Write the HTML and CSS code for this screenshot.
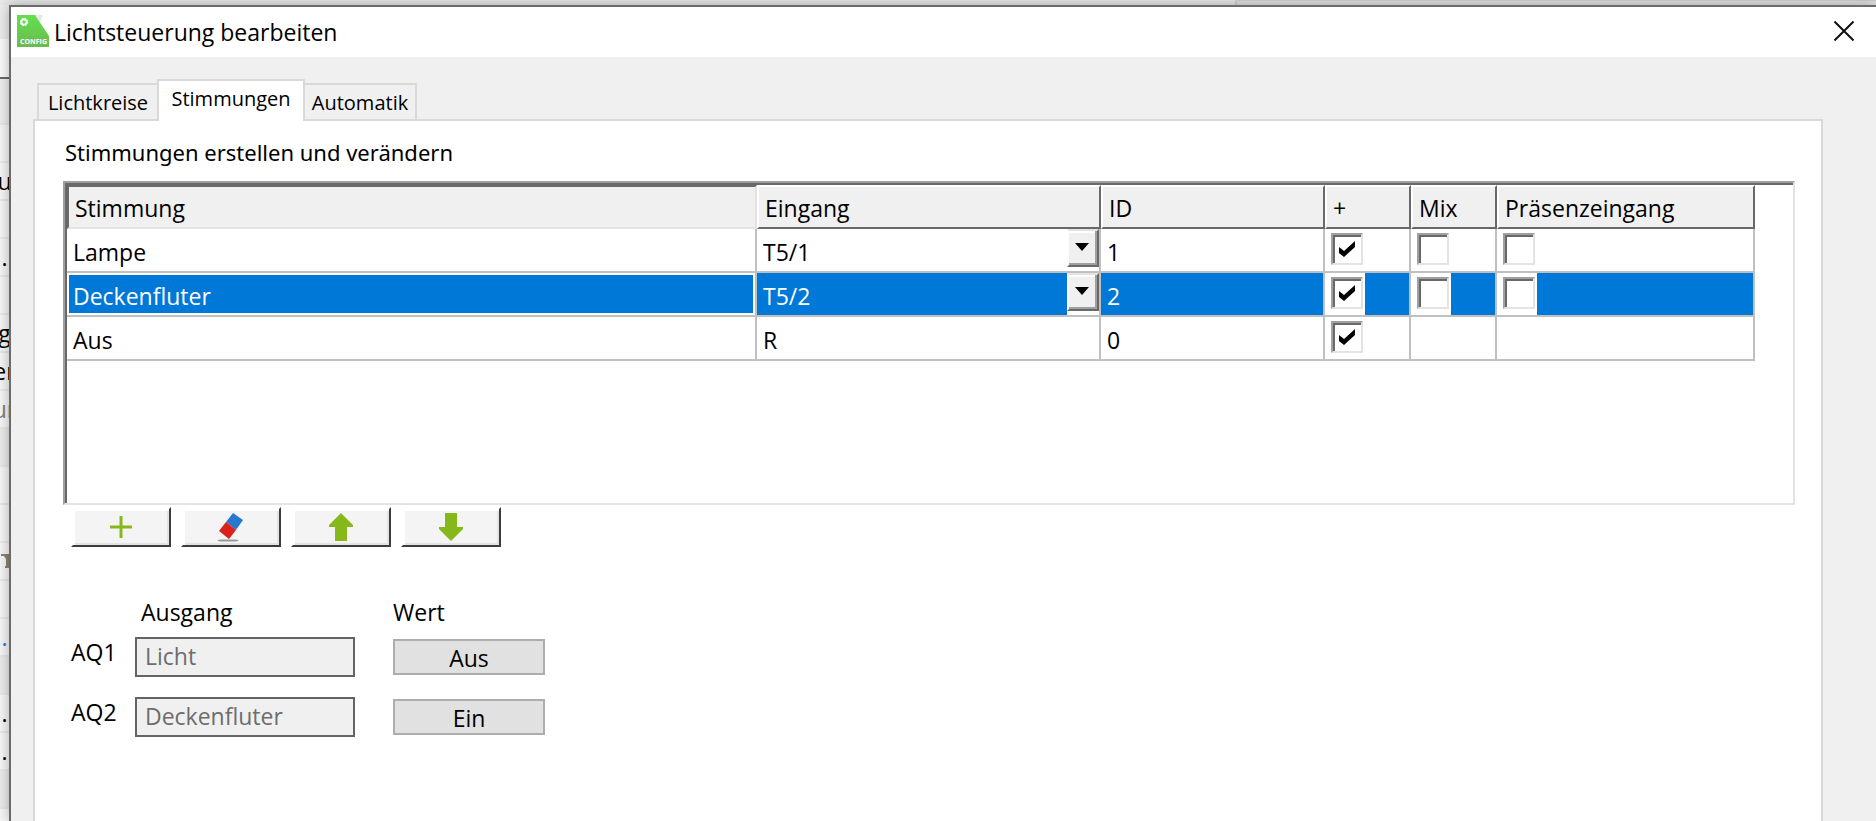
FILE: index.html
```html
<!DOCTYPE html>
<html lang="de">
<head>
    <meta charset="UTF-8">
    <meta name="viewport" content="width=device-width, initial-scale=1.0">
    <title>Lichtsteuerung bearbeiten</title>
    <link rel="stylesheet" href="styles.css">
</head>
<body>
    <!-- main window showing behind the dialog -->
    <div class="behind-top">
        <div class="behind-left"></div>
        <div class="behind-right"></div>
    </div>
    <div class="behind-side">
        <div class="side-head"></div>
        <div class="side-bar"></div>
        <div class="side-group"></div>
        <div class="side-row"></div>
        <div class="side-row">u</div>
        <div class="side-row"></div>
        <div class="side-row">.</div>
        <div class="side-row"></div>
        <div class="side-row">g</div>
        <div class="side-row">er</div>
        <div class="side-row muted">ur</div>
        <div class="side-row group"></div>
        <div class="side-row"></div>
        <div class="side-row"></div>
        <div class="side-row"><svg class="side-icon" width="8" height="16" viewBox="0 0 8 16"><path d="M0 1h8v2H0zM3 3h5v3H5zM5 6h3v9H4v-2h1z" fill="#8a8472"/></svg></div>
        <div class="side-row"></div>
        <div class="side-row link">...</div>
        <div class="side-row group"></div>
        <div class="side-row">.</div>
        <div class="side-row">.</div>
        <div class="side-row group"></div>
        <div class="side-row"></div>
    </div>

    <div class="dialog">
        <header class="titlebar">
            <svg class="app-icon" width="32" height="32" viewBox="0 0 32 32">
                <defs>
                    <linearGradient id="leaf" x1="0" y1="0" x2="0" y2="1">
                        <stop offset="0" stop-color="#63e04c"/>
                        <stop offset="1" stop-color="#6cba52"/>
                    </linearGradient>
                </defs>
                <path d="M18 0h8l-3 7z" fill="#e8e8ea"/>
                <path d="M0 0h18l14 21v11H0z" fill="url(#leaf)"/>
                <circle cx="7" cy="7" r="2.6" fill="none" stroke="#fff" stroke-width="1.8"/>
                <circle cx="7" cy="7" r="3.6" fill="none" stroke="#fff" stroke-width="1.2" stroke-dasharray="1.6 1.23"/>
                <text x="3" y="29" class="app-icon-text">CONFIG</text>
            </svg>
            <h1>Lichtsteuerung bearbeiten</h1>
            <button class="close-btn" aria-label="Schließen">
                <svg width="20" height="20" viewBox="0 0 20 20"><path d="M.5.5l19 19M19.5.5l-19 19" stroke="#111" stroke-width="2"/></svg>
            </button>
        </header>

        <div class="content">
            <div class="tabs" role="tablist">
                <button class="tab" role="tab">Lichtkreise</button>
                <button class="tab active" role="tab" aria-selected="true">Stimmungen</button>
                <button class="tab" role="tab">Automatik</button>
            </div>

            <main class="panel">
                <h2>Stimmungen erstellen und verändern</h2>

                <div class="list">
                    <table>
                        <colgroup>
                            <col class="col-name">
                            <col class="col-input">
                            <col class="col-id">
                            <col class="col-check">
                            <col class="col-check">
                            <col class="col-presence">
                        </colgroup>
                        <thead>
                            <tr>
                                <th class="pressed">Stimmung</th>
                                <th>Eingang</th>
                                <th>ID</th>
                                <th>+</th>
                                <th>Mix</th>
                                <th>Präsenzeingang</th>
                            </tr>
                        </thead>
                        <tbody>
                            <tr>
                                <td>Lampe</td>
                                <td class="control"><div class="dropdown"><select aria-label="Eingang Lampe"><option>T5/1</option></select><span class="arrow"></span></div></td>
                                <td>1</td>
                                <td class="control"><div class="check"><input type="checkbox" aria-label="Lampe +" checked></div></td>
                                <td class="control"><div class="check"><input type="checkbox" aria-label="Lampe Mix"></div></td>
                                <td class="control"><div class="check"><input type="checkbox" aria-label="Lampe Präsenzeingang"></div></td>
                            </tr>
                            <tr class="selected">
                                <td class="focused">Deckenfluter</td>
                                <td class="control"><div class="dropdown"><select aria-label="Eingang Deckenfluter"><option>T5/2</option></select><span class="arrow"></span></div></td>
                                <td>2</td>
                                <td class="control"><div class="check"><input type="checkbox" aria-label="Deckenfluter +" checked></div></td>
                                <td class="control"><div class="check"><input type="checkbox" aria-label="Deckenfluter Mix"></div></td>
                                <td class="control"><div class="check"><input type="checkbox" aria-label="Deckenfluter Präsenzeingang"></div></td>
                            </tr>
                            <tr>
                                <td>Aus</td>
                                <td>R</td>
                                <td>0</td>
                                <td class="control"><div class="check"><input type="checkbox" aria-label="Aus +" checked></div></td>
                                <td></td>
                                <td></td>
                            </tr>
                        </tbody>
                    </table>
                </div>

                <div class="toolbar">
                    <button class="tool-btn" aria-label="Hinzufügen">
                        <svg width="28" height="30" viewBox="0 0 28 30"><path d="M12.5 4h3v9.500h9.500v3h-9.500v9.500h-3v-9.500H3v-3h9.500z" fill="#86b81b"/></svg>
                    </button>
                    <button class="tool-btn" aria-label="Löschen">
                        <svg width="28" height="30" viewBox="0 0 28 30">
                            <path d="M16 1l10 7-7 10-10-8z" fill="#2878d2"/>
                            <path d="M9 10l10 8-7 9-10-8z" fill="#da211b"/>
                            <path d="M0 28.500l3-1h16l3 1-3 1H3z" fill="#999"/>
                        </svg>
                    </button>
                    <button class="tool-btn" aria-label="Nach oben">
                        <svg width="28" height="30" viewBox="0 0 28 30"><path d="M14 1L26 13v2h-6v14H8V15H2v-2z" fill="#86b81b"/></svg>
                    </button>
                    <button class="tool-btn" aria-label="Nach unten">
                        <svg width="28" height="30" viewBox="0 0 28 30"><path d="M14 29L2 17v-2h6V1h12v14h6v2z" fill="#86b81b"/></svg>
                    </button>
                </div>

                <div class="outputs">
                    <span></span>
                    <span class="caption indent">Ausgang</span>
                    <span class="caption">Wert</span>

                    <label for="aq1">AQ1</label>
                    <input id="aq1" type="text" value="Licht" disabled>
                    <button class="value-btn">Aus</button>

                    <label for="aq2">AQ2</label>
                    <input id="aq2" type="text" value="Deckenfluter" disabled>
                    <button class="value-btn">Ein</button>
                </div>
            </main>
        </div>
    </div>
</body>
</html>
```
FILE: styles.css
```css
* {
    box-sizing: border-box;
}

body {
    margin: 0;
    height: 100vh;
    overflow: hidden;
    display: grid;
    grid-template-columns: 9px 1fr;
    grid-template-rows: 5px 1fr;
    font-family: "Open Sans", "Noto Sans", sans-serif;
    font-size: 23px;
    line-height: 30px;
    color: #000;
    background-color: #f3f3f3;
}

button,
input,
select {
    font: inherit;
    color: inherit;
    margin: 0;
    border-radius: 0;
}

/* window in the background */
.behind-top {
    grid-column: 1 / 3;
    display: flex;
    background-color: #e8e8e8;
}

.behind-left {
    flex: 1236;
    border-right: 2px solid #d4d4d4;
}

.behind-right {
    flex: 640;
    border-top: 1px solid #d0d0d0;
    background-color: #e2e2e2;
}

.behind-side {
    overflow: hidden;
    white-space: nowrap;
    background-color: #f6f6f6;
}

.side-head {
    height: 34px;
    background-color: #ececec;
}

.side-bar {
    height: 40px;
    border-bottom: 2px solid #6a6a6a;
    background-color: #fafafa;
}

.side-group {
    height: 44px;
    background-color: #eee;
}

.side-row {
    display: flex;
    justify-content: center;
    align-items: center;
    height: 38px;
    border-top: 2px solid #e8e8e8;
}

.side-row.group {
    background-color: #ebebeb;
}

.side-row.muted {
    color: #808080;
}

.side-row.link {
    color: #3f6fe0;
}

.side-icon {
    flex: none;
}

/* dialog */
.dialog {
    position: relative;
    display: flex;
    flex-direction: column;
    min-width: 0;
    border: 2px solid #6b6b6b;
    border-right: 0;
    border-bottom: 0;
    background-color: #f0f0f0;
    box-shadow: 0 0 12px rgba(0, 0, 0, 0.3);
}

.titlebar {
    display: flex;
    align-items: center;
    height: 50px;
    padding: 0 22px 2px 6px;
    background-color: #fff;
}

.app-icon-text {
    font-size: 7px;
    font-weight: 700;
    fill: #fff;
}

h1 {
    flex: 1;
    margin: 0 0 0 5px;
    padding-top: 2px;
    font-size: 23px;
    font-weight: 400;
}

h2 {
    margin: 0;
    padding: 0 2px;
    font-family: "Noto Sans", sans-serif;
    font-size: 22px;
    font-weight: 400;
}

.close-btn {
    display: flex;
    padding: 0;
    border: 0;
    background: none;
}

.content {
    flex: 1;
    display: flex;
    flex-direction: column;
    padding: 22px 53px 0 22px;
}

.tabs {
    display: flex;
    align-items: flex-end;
    height: 42px;
    padding-left: 4px;
    margin-bottom: -2px;
    z-index: 1;
}

.tab {
    height: 38px;
    width: 122px;
    padding: 2px 0 0;
    border: 2px solid #d9d9d9;
    background-color: #f0f0f0;
    font-size: 20px;
    line-height: 30px;
}

.tab.active {
    width: 148px;
    height: 42px;
    margin: 0 -2px;
    padding: 0 0 4px;
    border-bottom: 0;
    background-color: #fff;
    z-index: 1;
}

.tab:last-child {
    width: 114px;
}

.panel {
    flex: 1;
    padding: 16px 26px 0 28px;
    border: 2px solid #d9d9d9;
    border-bottom: 0;
    background-color: #fff;
}

/* list */
.list {
    height: 324px;
    margin-top: 14px;
    border: 2px solid;
    border-color: #a0a0a0 #e3e3e3 #e3e3e3 #a0a0a0;
    box-shadow: inset 2px 2px #696969;
    padding: 2px 0 0 2px;
    overflow: hidden;
}

table {
    width: 1688px;
    table-layout: fixed;
    border-spacing: 0;
}

.col-name {
    width: 690px;
}

.col-input {
    width: 344px;
}

.col-id {
    width: 224px;
}

.col-check {
    width: 86px;
}

.col-presence {
    width: 258px;
}

th {
    height: 44px;
    padding: 2px 6px 0;
    border: 2px solid;
    border-color: #fff #696969 #696969 #fff;
    background-color: #f0f0f0;
    font-weight: 400;
    text-align: left;
}

th.pressed {
    border-color: #696969 #e3e3e3 #e3e3e3 #696969;
}

td {
    height: 44px;
    padding: 4px 6px 0;
    border-right: 2px solid #c0c0c0;
    border-bottom: 2px solid #c0c0c0;
}

td.control {
    padding: 0;
}

.selected td {
    background-color: #0078d7;
    color: #fff;
}

.selected .focused {
    box-shadow: inset 0 0 0 2px #fff;
}

.dropdown {
    position: relative;
    display: flex;
    height: 42px;
}

select {
    flex: 1;
    padding: 4px 6px 0;
    border: 0;
    appearance: none;
    background: none;
}

.arrow {
    position: absolute;
    top: 0;
    right: 0;
    width: 32px;
    height: 42px;
    background-color: #fff;
    pointer-events: none;
}

.arrow::before {
    content: "";
    display: block;
    height: 34px;
    border: 2px solid;
    border-color: #e3e3e3 #696969 #696969 #fff;
    background-color: #f0f0f0;
    box-shadow: inset -2px -2px #a0a0a0, inset 0 2px #fff;
}

.arrow::after {
    content: "";
    position: absolute;
    top: 14px;
    left: 8px;
    border: 7px solid transparent;
    border-top: 8px solid #000;
    border-bottom: 0;
}

.check {
    width: 40px;
    height: 42px;
    padding: 4px 0 0 6px;
    background-color: #fff;
}

.check input {
    display: block;
    width: 32px;
    height: 32px;
    appearance: none;
    border: 2px solid;
    border-color: #a0a0a0 #e3e3e3 #e3e3e3 #a0a0a0;
    box-shadow: inset 2px 2px #696969;
}

.check input:checked::before {
    content: "";
    display: block;
    width: 16px;
    height: 16px;
    margin: 6px;
    background-color: #000;
    clip-path: polygon(0 6px, 5px 10px, 16px 0, 16px 6px, 5px 16px, 0 12px);
}

/* buttons below the list */
.toolbar {
    display: flex;
    gap: 10px;
    padding: 2px 8px;
}

.tool-btn {
    display: flex;
    justify-content: center;
    width: 100px;
    height: 40px;
    padding: 3px 0 0;
    border: 2px solid;
    border-color: #fff #3c3c3c #3c3c3c #fff;
    background-color: #f4f4f4;
    box-shadow: inset 2px 2px #fff, inset -2px -2px #e3e3e3;
}

/* outputs */
.outputs {
    display: grid;
    grid-template-columns: 64px 220px 190px;
    row-gap: 20px;
    padding: 48px 8px;
}

.caption {
    height: 20px;
}

.indent {
    padding-left: 6px;
}

.outputs > :nth-child(3n) {
    margin-left: 38px;
}

.outputs input {
    width: 220px;
    height: 40px;
    padding: 0 8px 2px;
    border: 2px solid #646464;
    background-color: #f0f0f0;
    color: #6d6d6d;
}

.value-btn {
    align-self: center;
    height: 36px;
    padding: 2px 0 0;
    border: 2px solid #adadad;
    background-color: #e1e1e1;
}
```
